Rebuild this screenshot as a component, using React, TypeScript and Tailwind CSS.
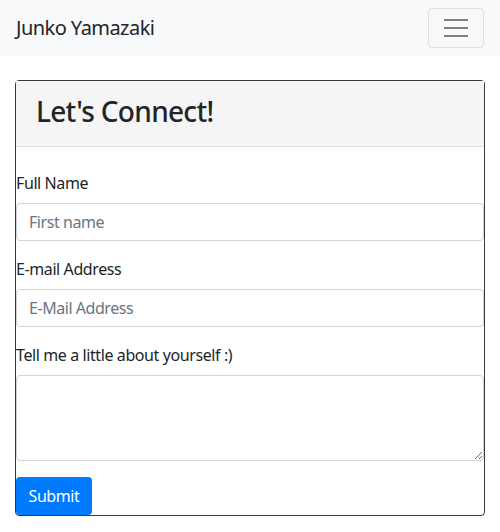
export default function App() {
  const font = "font-['Noto_Sans','Open_Sans',sans-serif]";
  const inputCls =
    "h-[38px] w-full rounded-[4px] border border-[#ced4da] px-3 text-[16px] tracking-[-0.45px] placeholder:text-[#6c757d]";
  const labelCls = "text-[16px] leading-6 tracking-[-0.4px]";
  return (
    <div className={`min-h-[532px] w-[500px] bg-white text-[#212529] ${font}`}>
      <nav className="flex h-[56px] items-center justify-between bg-[#f8f9fa] pl-4 pr-4">
        <span className="text-[20px] leading-[30px] tracking-[-0.55px]">Junko Yamazaki</span>
        <button className="flex h-[40px] w-[56px] flex-col items-center justify-center gap-[6px] rounded-[4px] border border-[#dfe0e1]">
          <span className="h-[2px] w-[24px] bg-[#7f7f7f]" />
          <span className="h-[2px] w-[24px] bg-[#7f7f7f]" />
          <span className="h-[2px] w-[24px] bg-[#7f7f7f]" />
        </button>
      </nav>
      <div className="px-[15px] pt-[24px]">
        <div className="flex flex-col rounded-[4px] border border-[#343a40]">
          <div className="flex h-[66px] items-center border-b border-[#dcdcdc] bg-[#f5f5f5] px-5 pb-[6px]">
            <h2 className="text-[28px] font-medium leading-[38px] tracking-[-0.7px]">Let's Connect!</h2>
          </div>
          <form className="flex flex-col pt-[24px]">
            <label className={`mb-2 ${labelCls}`}>Full Name</label>
            <input placeholder="First name" className={inputCls} />
            <label className={`mb-2 mt-4 ${labelCls}`}>E-mail Address</label>
            <input placeholder="E-Mail Address" className={inputCls} />
            <label className={`mb-2 mt-4 ${labelCls}`}>Tell me a little about yourself :)</label>
            <textarea className="h-[86px] w-full rounded-[4px] border border-[#ced4da] px-3 py-[6px] text-[16px]" />
            <div className="mt-4">
              <button
                type="button"
                className="h-[38px] w-[76px] rounded-[4px] bg-[#007bff] text-[16px] tracking-[-0.4px] text-white"
              >
                Submit
              </button>
            </div>
          </form>
        </div>
      </div>
    </div>
  );
}
